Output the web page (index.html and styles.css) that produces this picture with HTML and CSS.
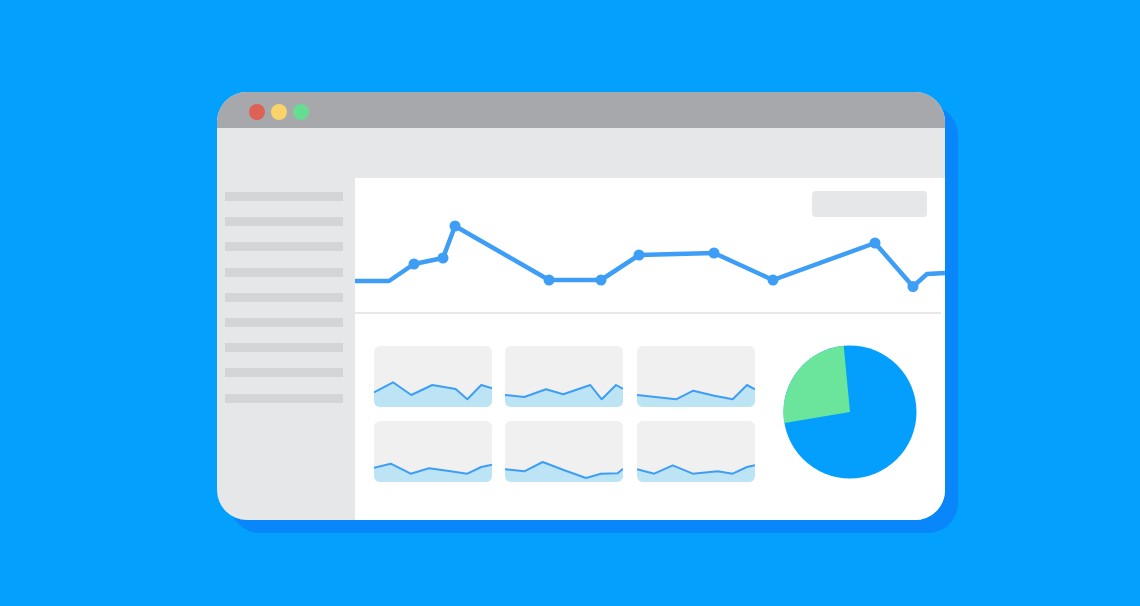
FILE: index.html
```html
<!DOCTYPE html>
<html>
<head>
<meta charset="utf-8">
<link rel="stylesheet" href="styles.css">
</head>
<body>
<div class="stage">
  <div class="window">
    <div class="titlebar">
      <span class="dot red"></span>
      <span class="dot yellow"></span>
      <span class="dot green"></span>
    </div>
    <div class="body">
      <div class="sidebar">
        <div class="line"></div><div class="line"></div><div class="line"></div>
        <div class="line"></div><div class="line"></div><div class="line"></div>
        <div class="line"></div><div class="line"></div><div class="line"></div>
      </div>
      <div class="main">
        <div class="panel">
          <div class="chart">
            <div class="button"></div>
            <svg class="linechart" width="590" height="134" viewBox="0 0 590 134">
              <polyline fill="none" stroke="#3e9ef5" stroke-width="4.5" stroke-linejoin="round" points="0,103 34,103 59,86 88,80 100,48 194,102 246,102 284,77 359,75 418,102 520,65 558,108.5 572,96 590,95"/>
              <g fill="#3e9ef5">
                <circle cx="59" cy="86" r="5.5"/>
                <circle cx="88" cy="80" r="5.5"/>
                <circle cx="100" cy="48" r="5.5"/>
                <circle cx="194" cy="102" r="5.5"/>
                <circle cx="246" cy="102" r="5.5"/>
                <circle cx="284" cy="77" r="5.5"/>
                <circle cx="359" cy="75" r="5.5"/>
                <circle cx="418" cy="102" r="5.5"/>
                <circle cx="520" cy="65" r="5.5"/>
                <circle cx="558" cy="108.5" r="5.5"/>
              </g>
            </svg>
          </div>
          <div class="divider"></div>
          <div class="lower">
            <div class="cards">
              <div class="card"><svg viewBox="0 0 118 61" width="118" height="61"><polygon class="area" points="0,46.3 19,36.3 37.3,49 58.3,39 81.7,43 93.3,53.3 107.3,39 118,42.3 118,61 0,61"/><polyline class="spark" points="0,46.3 19,36.3 37.3,49 58.3,39 81.7,43 93.3,53.3 107.3,39 118,42.3"/></svg></div>
              <div class="card"><svg viewBox="0 0 118 61" width="118" height="61"><polygon class="area" points="0,49 19.3,51 41,43.3 58.3,48.3 85.3,39 96.7,53.3 111,39 118,43 118,61 0,61"/><polyline class="spark" points="0,49 19.3,51 41,43.3 58.3,48.3 85.3,39 96.7,53.3 111,39 118,43"/></svg></div>
              <div class="card"><svg viewBox="0 0 118 61" width="118" height="61"><polygon class="area" points="0,49 39,53.3 56.3,44.7 77.3,49.7 95.7,53.3 110,39 118,43.3 118,61 0,61"/><polyline class="spark" points="0,49 39,53.3 56.3,44.7 77.3,49.7 95.7,53.3 110,39 118,43.3"/></svg></div>
              <div class="card"><svg viewBox="0 0 118 61" width="118" height="61"><polygon class="area" points="0,46.7 16.7,42.7 36.7,52.7 55,47.3 75,50 93.3,52.7 107.3,46 118,43.7 118,61 0,61"/><polyline class="spark" points="0,46.7 16.7,42.7 36.7,52.7 55,47.3 75,50 93.3,52.7 107.3,46 118,43.7"/></svg></div>
              <div class="card"><svg viewBox="0 0 118 61" width="118" height="61"><polygon class="area" points="0,48.3 19.3,50.3 37.7,41 59.3,49.3 81,57 96,52.7 112.7,52.3 118,47.7 118,61 0,61"/><polyline class="spark" points="0,48.3 19.3,50.3 37.7,41 59.3,49.3 81,57 96,52.7 112.7,52.3 118,47.7"/></svg></div>
              <div class="card"><svg viewBox="0 0 118 61" width="118" height="61"><polygon class="area" points="0,48.3 17.3,52.7 35.7,44.3 55.7,52.7 80.7,50.3 95.7,52.7 110,46 118,44.3 118,61 0,61"/><polyline class="spark" points="0,48.3 17.3,52.7 35.7,44.3 55.7,52.7 80.7,50.3 95.7,52.7 110,46 118,44.3"/></svg></div>
            </div>
            <svg class="pie" width="134" height="134" viewBox="0 0 134 134">
              <circle cx="67" cy="67" r="66.5" fill="#049ffc"/>
              <path d="M67,67 L1.4,78.1 A66.5,66.5 0 0 1 60.7,0.8 Z" fill="#6be59c"/>
            </svg>
          </div>
        </div>
      </div>
    </div>
  </div>
</div>
</body>
</html>
```

FILE: styles.css
```css
html, body {
  margin: 0;
  padding: 0;
}
body {
  background: #04a0fd;
  width: 1140px;
  height: 606px;
  overflow: hidden;
  font-family: "Liberation Sans", Arial, sans-serif;
}
.stage {
  padding: 92px 0 0 217px;
}
.window {
  width: 728px;
  height: 428px;
  border-radius: 30px;
  overflow: hidden;
  background: #e6e7e9;
  box-shadow: 13px 13px 0 #0a86fb;
  display: flex;
  flex-direction: column;
}
.titlebar {
  height: 36px;
  background: #a7a8ab;
  display: flex;
  align-items: flex-start;
  gap: 6px;
  padding: 12px 0 0 32px;
  box-sizing: border-box;
  flex: none;
}
.dot {
  width: 16px;
  height: 16px;
  border-radius: 50%;
}
.red { background: #de6156; }
.yellow { background: #fbd36b; }
.green { background: #66dd90; }
.body {
  flex: 1;
  display: flex;
}
.sidebar {
  width: 138px;
  flex: none;
  padding: 64px 0 0 8px;
  box-sizing: border-box;
  display: flex;
  flex-direction: column;
  gap: 16.2px;
}
.line {
  width: 118px;
  height: 9px;
  background: #d4d5d7;
}
.main {
  flex: 1;
  padding-top: 50px;
  display: flex;
}
.panel {
  flex: 1;
  background: #ffffff;
  display: flex;
  flex-direction: column;
}
.chart {
  position: relative;
  height: 134px;
}
.linechart {
  display: block;
}
.button {
  position: absolute;
  left: 457px;
  top: 13px;
  width: 115px;
  height: 26px;
  border-radius: 4px;
  background: #e6e7e9;
}
.divider {
  height: 2px;
  width: 586px;
  background: #e6e7e9;
}
.lower {
  display: flex;
  align-items: flex-start;
  padding: 32px 0 0 18.5px;
}
.cards {
  display: grid;
  grid-template-columns: repeat(3, 118px);
  grid-auto-rows: 61px;
  column-gap: 13.5px;
  row-gap: 14px;
}
.card {
  background: #f0f0f1;
  border-radius: 6px;
  overflow: hidden;
}
.card svg {
  display: block;
}
.area {
  fill: #bde4f5;
}
.spark {
  fill: none;
  stroke: #3e9ef5;
  stroke-width: 2;
  stroke-linejoin: round;
}
.pie {
  margin-left: 28.5px;
  margin-top: -1px;
  flex: none;
}
```
